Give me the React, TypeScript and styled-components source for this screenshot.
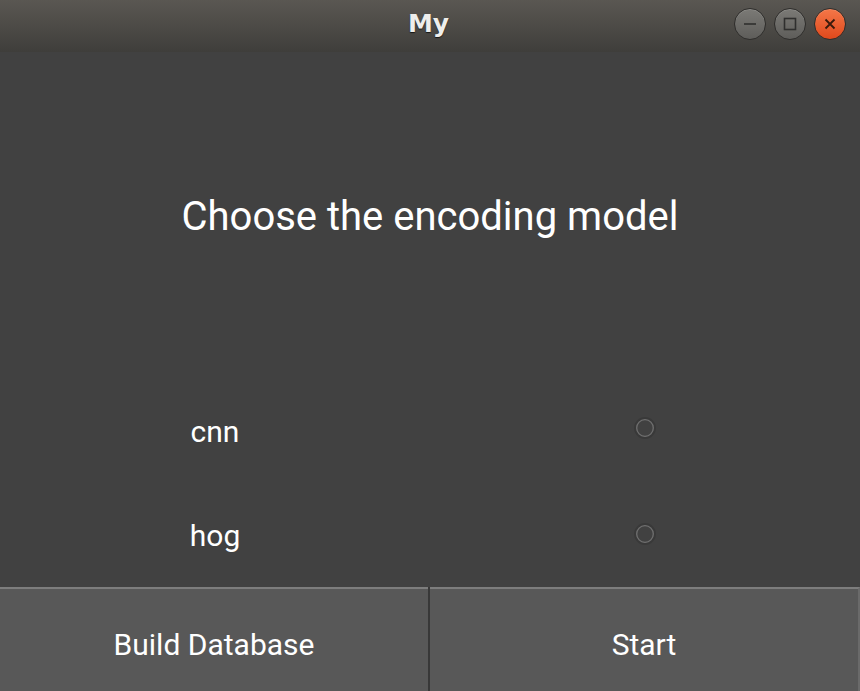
import React from "react";
import styled, { createGlobalStyle } from "styled-components";

const Global = createGlobalStyle`
  html, body { margin: 0; padding: 0; background: #414141; }
  body { width: 860px; height: 691px; overflow: hidden; }
`;

const Window = styled.div`
  width: 860px;
  height: 691px;
  display: flex;
  flex-direction: column;
  background: #414141;
  font-family: Roboto, "Liberation Sans", sans-serif;
`;

const TitleBar = styled.div`
  height: 52px;
  flex: none;
  position: relative;
  display: flex;
  align-items: center;
  justify-content: center;
  background: linear-gradient(#5a5752, #3f3e3b);
`;

const TitleText = styled.div`
  font-family: "DejaVu Sans", "Noto Sans", sans-serif;
  font-weight: bold;
  font-size: 25px;
  color: #eeeeec;
  text-shadow: 0 1px 1px rgba(0, 0, 0, 0.7);
  margin-left: -3px;
  margin-top: -5px;
`;

const Controls = styled.div`
  position: absolute;
  right: 14px;
  top: 8px;
  display: flex;
  gap: 8px;
`;

const WinButton = styled.div<{ $close?: boolean }>`
  width: 32px;
  height: 32px;
  box-sizing: border-box;
  border-radius: 50%;
  border: 1px solid #2e2d2b;
  display: flex;
  align-items: center;
  justify-content: center;
  background: ${(p) =>
    p.$close
      ? "linear-gradient(#f47748, #e0491c)"
      : "linear-gradient(#7b7a76, #5e5d5a)"};
  box-shadow: inset 0 1px 0 rgba(255, 255, 255, 0.15);
`;

const Content = styled.div`
  flex: 1;
  display: flex;
  flex-direction: column;
`;

const Heading = styled.div`
  height: 328px;
  display: flex;
  align-items: center;
  justify-content: center;
  color: #ffffff;
  font-size: 40px;
`;

const OptionGrid = styled.div`
  display: grid;
  grid-template-columns: 1fr 1fr;
  grid-auto-rows: 103.5px;
`;

const Cell = styled.div<{ $shift?: number }>`
  display: flex;
  align-items: center;
  justify-content: center;
  color: #ffffff;
  font-size: 30px;
  transform: translateY(${(p) => p.$shift ?? 0}px);
`;

const ButtonBar = styled.div`
  height: 104px;
  display: grid;
  grid-template-columns: 428px 430px;
  column-gap: 2px;
  background: #383838;
`;

const ActionButton = styled.div<{ $edge?: boolean }>`
  background: #585858;
  border-top: 2px solid #7d7d7d;
  ${(p) => (p.$edge ? "border-right: 2px solid #6a6a6a;" : "")}
  display: flex;
  align-items: center;
  justify-content: center;
  color: #ffffff;
  font-size: 30px;
  padding-top: 8px;
`;

const Radio = () => (
  <svg width="22" height="22" viewBox="0 0 22 22">
    <circle cx="11" cy="11" r="10" fill="none" stroke="rgba(0,0,0,0.12)" strokeWidth="2" />
    <circle cx="11" cy="11" r="8.3" fill="none" stroke="#6f6f6f" strokeWidth="1.3" />
  </svg>
);

export default function App() {
  return (
    <>
      <Global />
      <Window>
        <TitleBar>
          <TitleText>My</TitleText>
          <Controls>
            <WinButton>
              <svg width="16" height="16" viewBox="0 0 16 16">
                <line x1="2" y1="8" x2="14" y2="8" stroke="#2f2f2e" strokeWidth="1.6" />
              </svg>
            </WinButton>
            <WinButton>
              <svg width="16" height="16" viewBox="0 0 16 16">
                <rect x="2.5" y="2.5" width="11" height="11" fill="none" stroke="#2f2f2e" strokeWidth="1.6" />
              </svg>
            </WinButton>
            <WinButton $close>
              <svg width="16" height="16" viewBox="0 0 16 16">
                <path d="M3.5 3.5 L12.5 12.5 M12.5 3.5 L3.5 12.5" stroke="#3a1a0c" strokeWidth="1.8" />
              </svg>
            </WinButton>
          </Controls>
        </TitleBar>
        <Content>
          <Heading>Choose the encoding model</Heading>
          <OptionGrid>
            <Cell>cnn</Cell>
            <Cell $shift={-4}><Radio /></Cell>
            <Cell>hog</Cell>
            <Cell $shift={-1}><Radio /></Cell>
          </OptionGrid>
          <ButtonBar>
            <ActionButton>Build Database</ActionButton>
            <ActionButton $edge>Start</ActionButton>
          </ButtonBar>
        </Content>
      </Window>
    </>
  );
}
